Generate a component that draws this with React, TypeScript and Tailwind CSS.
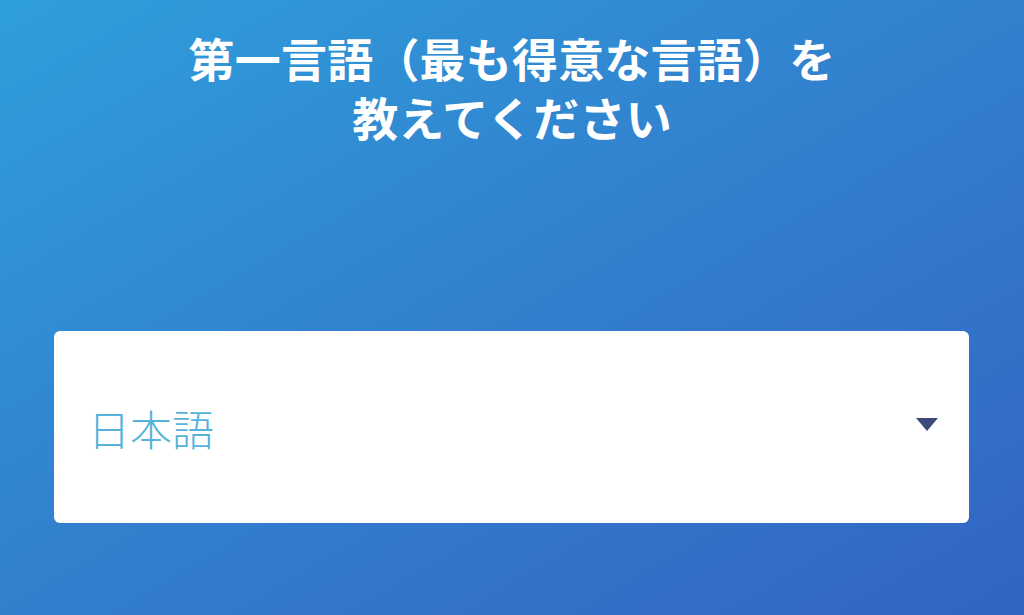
import React from "react";

export default function App() {
  return (
    <div
      className="w-[1024px] h-[615px] overflow-hidden flex flex-col bg-[linear-gradient(150deg,#2e9fdb_0%,#3282cf_45%,#3264c3_100%)]"
      style={{ fontFamily: '"Noto Sans CJK JP", "Noto Sans", sans-serif' }}
    >
      <h1 className="pt-[28px] text-center text-white font-bold text-[46px] leading-[59px] tracking-[0.2px]">
        第一言語（最も得意な言語）を
        <br />
        教えてください
      </h1>
      <div className="mt-[185px] ml-[54px] mr-[55px] h-[192px] bg-white rounded-[6px] flex items-center justify-between pl-[34px] pr-[31px]">
        <span className="text-[42px] font-light text-[#55b2d9] leading-none pt-[2px]">日本語</span>
        <svg width="22" height="13" viewBox="0 0 22 13" className="mt-[-6px]">
          <polygon points="0,0 22,0 11,13" fill="#3f4a7c" />
        </svg>
      </div>
    </div>
  );
}
